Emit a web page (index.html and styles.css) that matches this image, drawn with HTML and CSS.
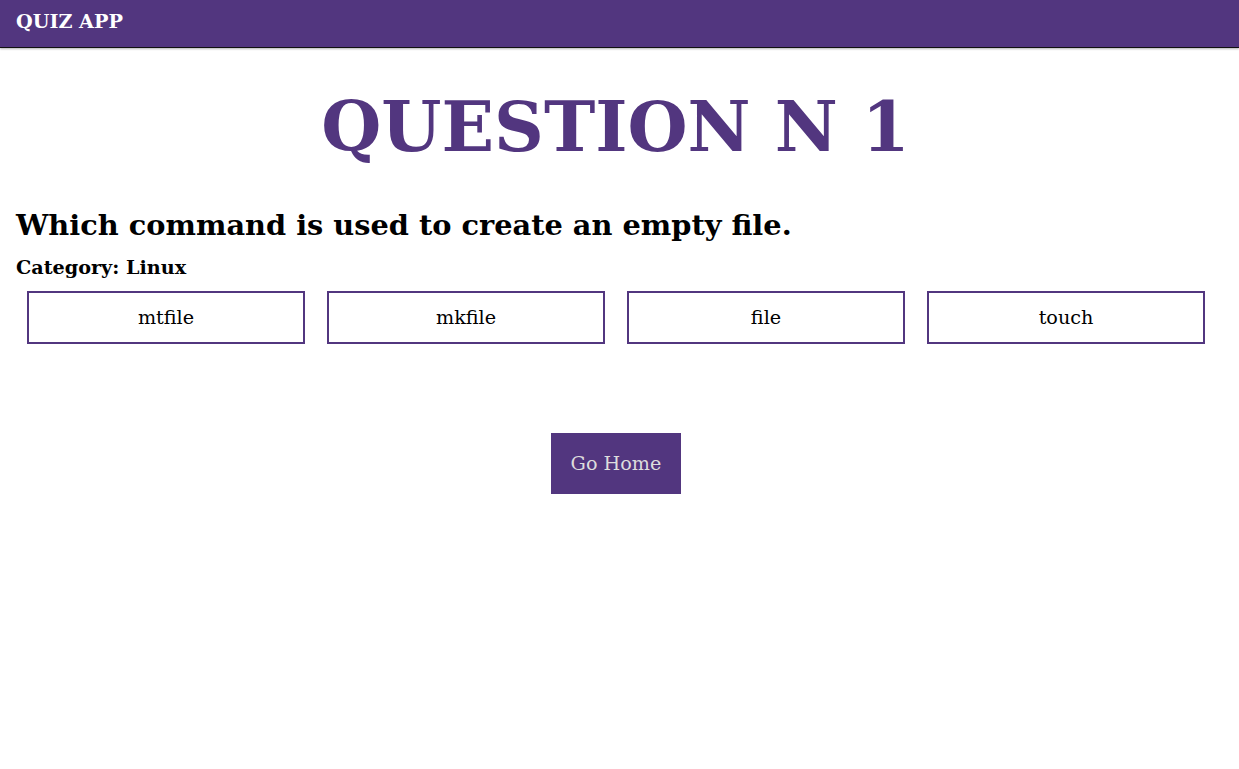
FILE: index.html
```html
<!DOCTYPE html>
<html>
<head>
<meta charset="utf-8">
<title>Quiz App</title>
<link rel="stylesheet" href="styles.css">
</head>
<body>
<header class="topbar">
  <div class="brand">QUIZ APP</div>
</header>
<main class="quiz">
  <h1 class="q-title">QUESTION N 1</h1>
  <h2 class="q-text">Which command is used to create an empty file.</h2>
  <div class="q-cat">Category: Linux</div>
  <div class="options">
    <button class="option">mtfile</button>
    <button class="option">mkfile</button>
    <button class="option">file</button>
    <button class="option">touch</button>
  </div>
  <div class="actions">
    <button class="home-btn">Go Home</button>
  </div>
</main>
</body>
</html>
```
FILE: styles.css
```css
html, body {
  margin: 0;
  padding: 0;
  background: #fff;
  font-family: "DejaVu Serif", serif;
}
.topbar {
  height: 47px;
  background: #52367f;
  display: flex;
  align-items: center;
  padding: 0 16px;
  box-shadow: 0 1px 0 #111, 0 2px 2px rgba(0,0,0,0.3);
}
.brand {
  color: #fff;
  font-weight: bold;
  font-size: 19.2px;
  margin-top: -4px;
}
.quiz {
  padding: 0 16px;
}
.q-title {
  margin: 0;
  padding-top: 38px;
  text-align: center;
  color: #52367f;
  font-size: 69px;
  line-height: 84px;
  font-weight: bold;
  padding-right: 8px;
}
.q-text {
  margin: 39px 0 0;
  font-size: 28.8px;
  line-height: 34px;
  font-weight: bold;
  color: #000;
}
.q-cat {
  margin-top: 14px;
  font-size: 19.2px;
  line-height: 24px;
  font-weight: bold;
}
.options {
  display: flex;
  gap: 22px;
  padding: 0 11px;
  margin-top: 11px;
}
.option {
  flex: 0 0 278px;
  height: 53px;
  background: #fff;
  border: 2px solid #52367f;
  font-family: "DejaVu Serif", serif;
  font-size: 19.2px;
  color: #000;
  padding: 0;
}
.actions {
  display: flex;
  justify-content: center;
  padding-top: 89px;
  padding-right: 7px;
}
.home-btn {
  width: 130px;
  height: 61px;
  background: #52367f;
  border: none;
  color: #ddd;
  font-family: "DejaVu Serif", serif;
  font-size: 19.2px;
  padding: 0;
}
```
